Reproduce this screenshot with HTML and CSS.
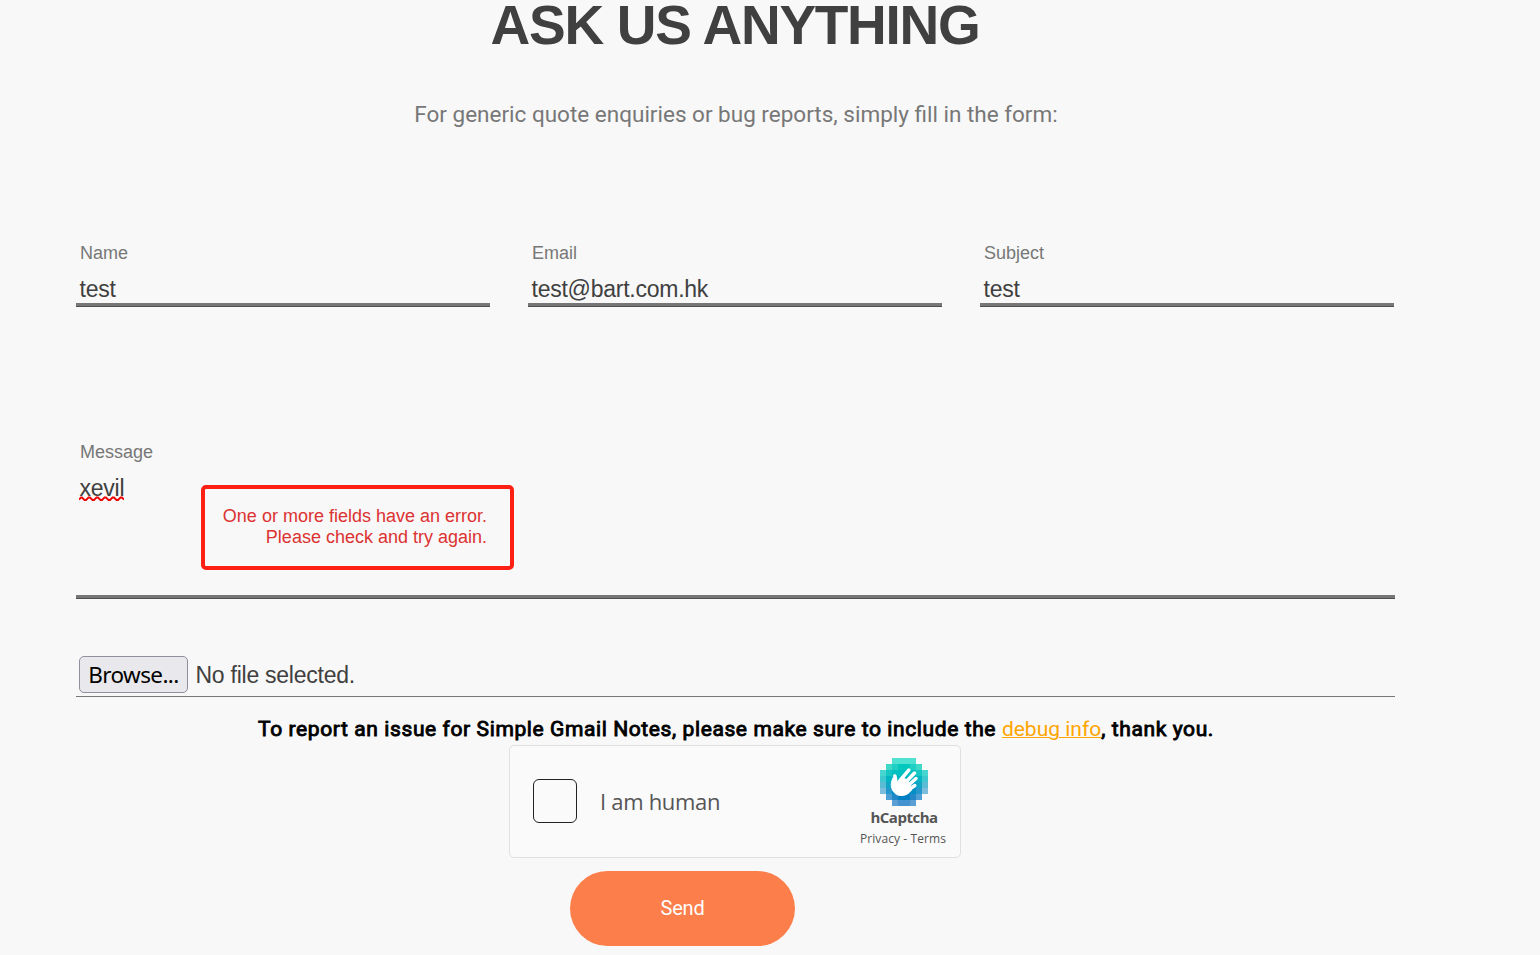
FILE: index.html
```html
<!DOCTYPE html>
<html lang="en">
<head>
<meta charset="utf-8">
<title>Ask us anything</title>
<link rel="stylesheet" href="styles.css">
</head>
<body>
<main class="contact">
  <h1 class="title">ASK US ANYTHING</h1>
  <p class="intro">For generic quote enquiries or bug reports, simply fill in the form:</p>
  <form class="form">
    <div class="row">
      <div class="field"><label class="label">Name</label><div class="value">test</div></div>
      <div class="field"><label class="label">Email</label><div class="value">test@bart.com.hk</div></div>
      <div class="field"><label class="label">Subject</label><div class="value">test</div></div>
    </div>
    <div class="field message">
      <label class="label">Message</label>
      <div class="value"><span class="misspelt">xevil<svg class="squiggle" width="45" height="5" viewBox="0 0 45 5"><path d="M0 3.5 L2 1.5 H3 L5.5 4 H7 L9.5 1.5 H11 L13.5 4 H15 L17.5 1.5 H19 L21.5 4 H23 L25.5 1.5 H27 L29.5 4 H31 L33.5 1.5 H35 L37.5 4 H39 L41.5 1.5 H43 L45 3.5" fill="none" stroke="#f00000" stroke-width="1.8"/></svg></span></div>
      <div class="error">One or more fields have an error.<br>Please check and try again.</div>
    </div>
    <div class="file"><span class="browse">Browse...</span><span class="filename">No file selected.</span></div>
    <p class="note">To report an issue for Simple Gmail Notes, please make sure to include the <a class="link">debug info</a>, thank you.</p>
    <div class="captcha">
      <span class="checkbox"></span>
      <span class="human">I am human</span>
      <div class="brand">
        <svg class="logo" width="48" height="48" viewBox="0 0 48 48" shape-rendering="crispEdges">
          <path fill="#4fe1d2" d="M12 0h24v6H12z"/>
          <path fill="#3fd9ca" d="M6 6h6v6H6zM36 6h6v6h-6z"/>
          <path fill="#20d0c4" d="M12 6h6v6h-6zM30 6h6v6h-6z"/>
          <path fill="#00c8bd" d="M18 6h12v6H18z"/>
          <path fill="#46d5d0" d="M0 12h6v6H0zM42 12h6v6h-6z"/>
          <path fill="#16c6c2" d="M6 12h6v6H6zM36 12h6v6h-6z"/>
          <path fill="#00c1bf" d="M12 12h24v6H12z"/>
          <path fill="#40c8d0" d="M0 18h6v6H0zM42 18h6v6h-6z"/>
          <path fill="#00b5c1" d="M6 18h36v6H6z"/>
          <path fill="#5cbcd6" d="M0 24h6v6H0zM42 24h6v6h-6z"/>
          <path fill="#10a5c5" d="M6 24h6v6H6zM36 24h6v6h-6z"/>
          <path fill="#00a5c6" d="M12 24h24v6H12z"/>
          <path fill="#7bbddd" d="M0 30h6v6H0zM42 30h6v6h-6z"/>
          <path fill="#2798cb" d="M6 30h6v6H6zM36 30h6v6h-6z"/>
          <path fill="#0090c5" d="M12 30h24v6H12z"/>
          <path fill="#4e9fd3" d="M6 36h6v6H6zM36 36h6v6h-6z"/>
          <path fill="#2488c8" d="M12 36h6v6h-6zM30 36h6v6h-6z"/>
          <path fill="#0080c2" d="M18 36h12v6H18z"/>
          <path fill="#5b9fd5" d="M12 42h6v6h-6zM30 42h6v6h-6z"/>
          <path fill="#4493d0" d="M18 42h12v6H18z"/>
          <g shape-rendering="geometricPrecision" stroke="#fff" stroke-linecap="round" stroke-linejoin="round" fill="none">
            <path fill="#fff" stroke-width="1" d="M13 20C11 24 10.5 28 12.500 32C14.500 36 18 37.800 22 37.500C27 37.300 29 35 31.500 32L28 22L21.500 19.500L17 24.500Z"/>
            <path stroke-width="3.600" d="M14.800 18C15.600 20 15 22 16.500 25"/>
            <path stroke-width="3.500" d="M28.800 12.200L20 22.500M34.500 15L24 26M36 20.500L26 29.500M34.800 27.500L27 33"/>
          </g>
        </svg>
        <span class="brand-name">hCaptcha</span>
        <span class="legal">Privacy - Terms</span>
      </div>
    </div>
    <div class="send">Send</div>
  </form>
</main>
</body>
</html>
```
FILE: styles.css
```css
* { box-sizing: border-box; }
body { margin: 0; height: 955px; overflow: hidden; background: #f8f8f8; font-family: "Liberation Sans", Arial, sans-serif; }
.contact { width: 1320px; margin-left: 76px; display: flow-root; }
.title { margin: 0; height: 50px; text-align: center; font-size: 55px; line-height: 50px; letter-spacing: -1.300px; text-indent: -2px; color: #404040; white-space: nowrap; }
.intro { margin: 50px 0 0; text-align: center; font: 22.500px/28px Roboto, sans-serif; color: #777; white-space: nowrap; }
.form { margin-top: 114px; }
.row { display: grid; grid-template-columns: repeat(3, 414px); gap: 38px; }
.field { height: 65px; border-bottom: 1px solid #505050; box-shadow: inset 0 -3px #777; }
.label { display: block; padding-left: 4px; font-size: 18px; line-height: 22px; color: #777; }
.value { padding: 11px 0 0 3.500px; font-size: 23px; line-height: 28px; letter-spacing: -0.250px; color: #404040; }
.message { position: relative; width: 1319px; height: 158px; margin-top: 134px; }
.misspelt { position: relative; }
.squiggle { position: absolute; left: -0.500px; bottom: 0; }
.error { position: absolute; left: 125px; top: 44px; width: 313px; height: 85px; border: 4px solid #ff2014; border-radius: 5px; padding: 17px 23px 0 0; text-align: right; font-size: 18px; line-height: 21px; color: #dc3232; white-space: nowrap; }
.file { display: flex; align-items: center; width: 1319px; height: 41px; margin-top: 57px; padding: 0 0 3px 3px; border-bottom: 1px solid #777; }
.browse { width: 109px; height: 37px; border: 1px solid #8f8f9d; border-radius: 5px; background: #e9e9ed; color: #000; text-align: center; font: 22.500px/35px "Noto Sans", sans-serif; letter-spacing: -0.600px; }
.filename { margin-left: 7.500px; font-size: 23px; line-height: 28px; letter-spacing: -0.250px; color: #404040; }
.note { margin: 18px 0 0; text-align: center; font: 400 21px/28px Roboto, sans-serif; letter-spacing: 0.600px; -webkit-text-stroke: 0.900px #000; color: #000; white-space: nowrap; }
.link { color: #ffa500; letter-spacing: 0; -webkit-text-stroke: 0; text-decoration: underline; text-decoration-thickness: 1px; }
.captcha { display: flex; align-items: flex-start; width: 452px; height: 113px; margin: 2px 0 0 433px; padding: 0 0 0 23px; border: 1px solid #e0e0e0; border-radius: 5px; background: #fafafa; }
.checkbox { width: 44px; height: 44px; margin-top: 33px; border: 1px solid #222; border-radius: 6px; background: #fafafa; }
.human { margin: 40px 0 0 23px; font: 22px/30px "Open Sans", sans-serif; letter-spacing: -0.300px; color: #555; white-space: nowrap; }
.brand { display: flex; flex-direction: column; align-items: center; width: 100px; height: 111px; margin-left: auto; margin-right: 6px; padding-top: 12px; }
.brand-name { margin-top: 1px; font: 700 15px/20px "Open Sans", sans-serif; letter-spacing: -0.500px; color: #555; }
.legal { margin: 2px 2px 0 0; font: 12px/20px "Open Sans", sans-serif; letter-spacing: 0.100px; color: #555; white-space: nowrap; }
.send { width: 225px; height: 75px; margin: 13px 0 0 494px; border-radius: 38px; background: #fc7e4a; color: #fff; text-align: center; font: 20px/75px Roboto, sans-serif; letter-spacing: -0.200px; }
```
